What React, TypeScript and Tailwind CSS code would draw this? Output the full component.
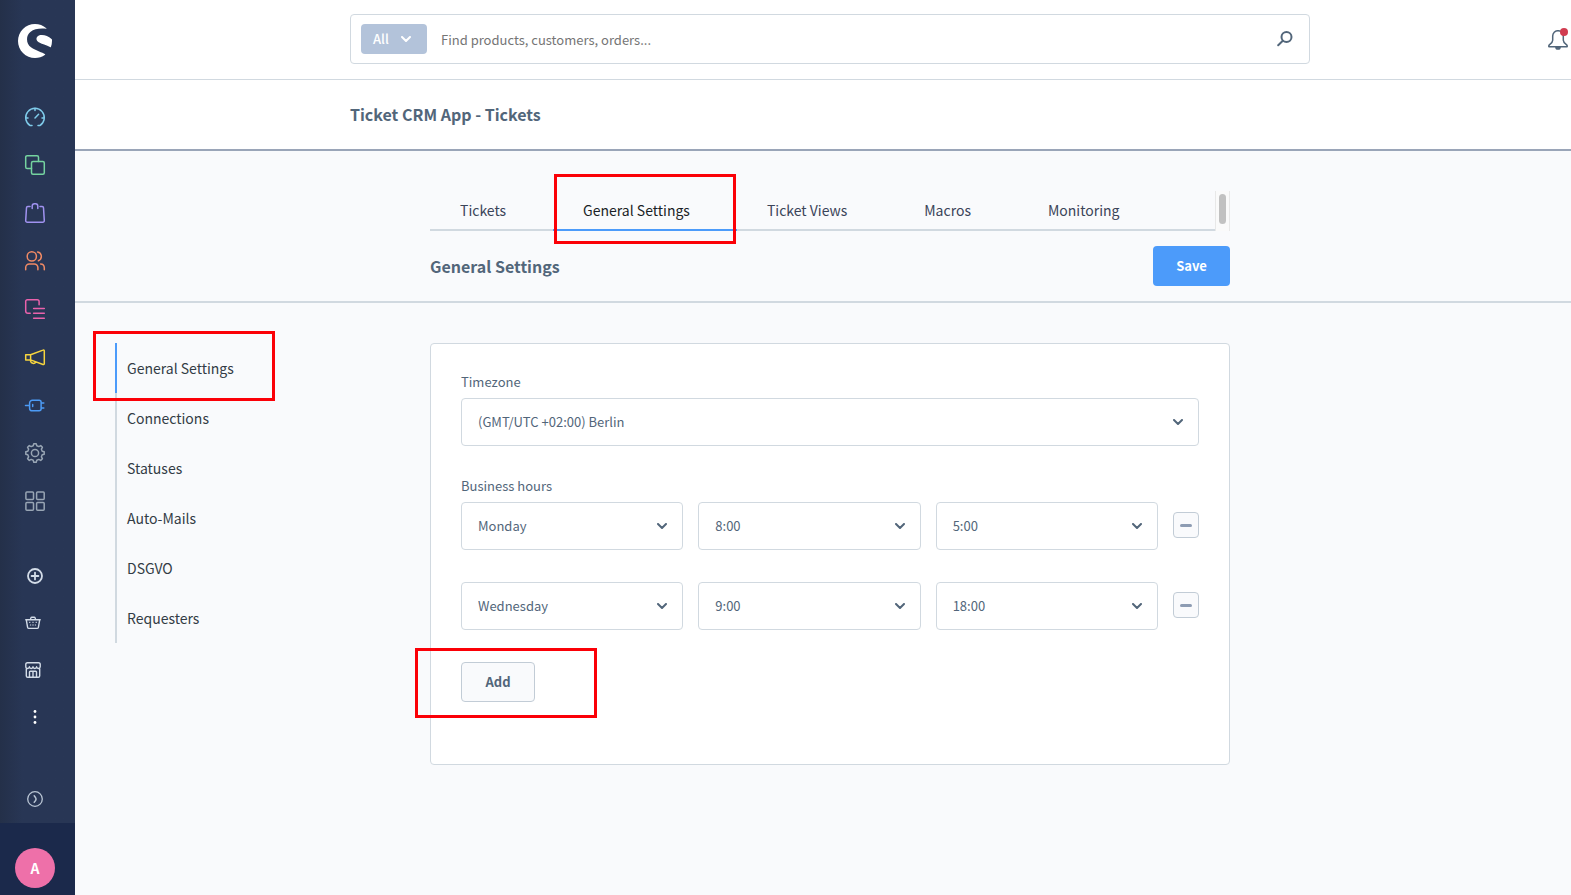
import React from 'react';
import { SiShopware } from 'react-icons/si';

const mainIcons: { label: string; color: string; icon: React.ReactNode }[] = [
  {
    label: 'Dashboard',
    color: 'text-[#7fcbea]',
    icon: <path d="M7 18.6H5.2A9.3 9.3 0 1 1 14.8 18.6H13M.9 11H3M17 11h2.1M10 1.2v2.3M10 11l3.6-3.8" />,
  },
  {
    label: 'Catalogues',
    color: 'text-[#75d3a0]',
    icon: (
      <>
        <path d="M6.5 13.5H2.2A1.5 1.5 0 0 1 .7 12V2.2A1.5 1.5 0 0 1 2.2.7H12a1.5 1.5 0 0 1 1.5 1.5v4.3" />
        <rect x="6.5" y="6.5" width="12.8" height="12.8" rx="1.5" />
      </>
    ),
  },
  {
    label: 'Orders',
    color: 'text-[#a092f0]',
    icon: <path d="M5 3.6H2.8a1.3 1.3 0 0 0-1.3 1.2L.7 17.6a1.6 1.6 0 0 0 1.6 1.7h15.4a1.6 1.6 0 0 0 1.6-1.7l-.8-12.8a1.3 1.3 0 0 0-1.3-1.2H15M7.2 5.6V3a2.3 2.3 0 0 1 2.3-2.3h1A2.3 2.3 0 0 1 12.800 3v2.600" />,
  },
  {
    label: 'Customers',
    color: 'text-[#f08a65]',
    icon: (
      <>
        <circle cx="6.8" cy="5.4" r="4.6" />
        <path d="M.7 18.8v-2.3a3.6 3.6 0 0 1 3.6-3.6h5a3.6 3.6 0 0 1 3.6 3.6v2.3M12.6.9a4.6 4.6 0 0 1 .8 8.8M15.6 12.9a3.9 3.9 0 0 1 3.7 3.8v2.1" />
      </>
    ),
  },
  {
    label: 'Content',
    color: 'text-[#ea62ac]',
    icon: <path d="M5.2 14.3H3a2.3 2.3 0 0 1-2.3-2.3V2.3A1.6 1.6 0 0 1 2.3.7h10a1.8 1.8 0 0 1 1.8 1.8v3.2M8.6 9.4h10.7M8.6 14.3h10.7M8.6 19.3h10.7" />,
  },
  {
    label: 'Marketing',
    color: 'text-[#f7d53e]',
    icon: <path d="M.7 7.8h4.9v5.1H.7zM5.6 7.8 18 3.1a.9.9 0 0 1 1.3.8v12.8a.9.9 0 0 1-1.3.8L5.6 12.9M5.6 13v1.2a3 3 0 0 0 5.2 1.1" />,
  },
  {
    label: 'Extensions',
    color: 'text-[#4c9bf5]',
    icon: <path d="M.5 10.5h4M7.6 5.2h6.5a2 2 0 0 1 2 2v6.6a2 2 0 0 1-2 2H7.2a2.6 2.6 0 0 1-2.6-2.6V8a2.8 2.8 0 0 1 3-2.8zM16.1 7.9h2.7M16.1 12.9h2.7M7.7 9.4v2.1" />,
  },
  {
    label: 'Settings',
    color: 'text-[#98a5b4]',
    icon: (
      <>
        <circle cx="10" cy="10" r="3.6" />
        <path d="M8.2 2.8 8.8.8h2.4l.6 2 2 .8 1.9-1 1.7 1.7-1 1.9.8 2 2 .6v2.4l-2 .6-.8 2 1 1.9-1.7 1.7-1.9-1-2 .8-.6 2H8.8l-.6-2-2-.8-1.9 1-1.7-1.7 1-1.9-.8-2-2-.6V8.8l2-.6.8-2-1-1.9 1.7-1.7 1.9 1z" />
      </>
    ),
  },
  {
    label: 'Apps',
    color: 'text-[#98a5b4]',
    icon: (
      <>
        <rect x=".9" y=".9" width="7.6" height="7.6" rx="1" />
        <rect x="11.6" y=".9" width="7.6" height="7.6" rx="1" />
        <rect x=".9" y="11.6" width="7.6" height="7.6" rx="1" />
        <rect x="11.6" y="11.6" width="7.6" height="7.6" rx="1" />
      </>
    ),
  },
];

const tabs = ['Tickets', 'General Settings', 'Ticket Views', 'Macros', 'Monitoring'];
const sections = ['General Settings', 'Connections', 'Statuses', 'Auto-Mails', 'DSGVO', 'Requesters'];
const businessHours = [
  { day: 'Monday', from: '8:00', to: '5:00' },
  { day: 'Wednesday', from: '9:00', to: '18:00' },
];

const Chevron: React.FC<{ className?: string }> = ({ className = '' }) => (
  <svg viewBox="0 0 10 6" className={`h-[6px] w-[10px] ${className}`} fill="none" stroke="currentColor" strokeWidth="2" strokeLinecap="round" strokeLinejoin="round">
    <path d="M1 1l4 4 4-4" />
  </svg>
);

// Red frame drawn on top of the element that the guide points at.
const Highlight: React.FC<{ className: string }> = ({ className }) => (
  <span aria-hidden="true" className={`pointer-events-none absolute z-10 h-[70px] w-[182px] border-3 border-[#fb0007] ${className}`} />
);

const SelectBox: React.FC<{ id?: string; label?: string; value: string }> = ({ id, label, value }) => (
  <div className="relative">
    <select
      id={id}
      aria-label={label}
      defaultValue={value}
      className="block h-12 w-full appearance-none rounded border border-[#d1d9e0] bg-white px-4 text-[13px] text-[#52667a] outline-none"
    >
      <option>{value}</option>
    </select>
    <Chevron className="pointer-events-none absolute top-[21px] right-4 text-[#52667a]" />
  </div>
);

const Sidebar: React.FC = () => (
  <aside className="sticky top-0 flex h-screen w-[75px] shrink-0 flex-col bg-linear-to-r from-[#243049] to-[#283655] to-30%">
    <a href="#" aria-label="Home" className="mt-6 mb-[35px] ml-[18px] block w-[34px] text-white">
      <SiShopware className="size-[34px]" />
    </a>
    <nav aria-label="Main" className="w-[70px]">
      {mainIcons.map((item) => (
        <a key={item.label} href="#" aria-label={item.label} className={`flex h-12 items-center justify-center ${item.color}`}>
          <svg viewBox="0 0 20 20" className="size-5 overflow-visible" fill="none" stroke="currentColor" strokeWidth="1.5" strokeLinecap="round" strokeLinejoin="round">
            {item.icon}
          </svg>
        </a>
      ))}
    </nav>
    <nav aria-label="Shortcuts" className="mt-[27px] w-[70px] text-[#d3dce8]">
      <a href="#" aria-label="Add" className="flex h-[47px] items-center justify-center">
        <svg viewBox="0 0 16 16" className="size-4" fill="none" stroke="currentColor" strokeWidth="1.8" strokeLinecap="round">
          <circle cx="8" cy="8" r="7" />
          <path d="M8 4.6v6.8M4.6 8h6.8" />
        </svg>
      </a>
      <a href="#" aria-label="Basket" className="flex h-[47px] items-center pl-[25px]">
        <svg viewBox="0 0 16 16" className="size-4" fill="none" stroke="currentColor" strokeWidth="1.4" strokeLinecap="round" strokeLinejoin="round">
          <path d="M.8 4.7h14.4M1.3 4.8l1.3 7.5a1.4 1.4 0 0 0 1.4 1.1h8a1.4 1.4 0 0 0 1.4-1.1l1.3-7.5M5.4 4.5l.5-1.6a1 1 0 0 1 1-.7h2.2a1 1 0 0 1 1 .7l.5 1.6" />
          <path d="M4.4 7.3h.6M7.7 7.3h.6M11 7.3h.6M5.3 10h.5M7.7 10h.6M10.2 10h.5" strokeWidth="1" />
        </svg>
      </a>
      <a href="#" aria-label="Storefront" className="flex h-[47px] items-center pl-[25px]">
        <svg viewBox="0 0 16 16" className="size-4" fill="none" stroke="currentColor" strokeWidth="1.4" strokeLinecap="round" strokeLinejoin="round">
          <path d="M1.3 7v7a1.4 1.4 0 0 0 1.4 1.3h10.6a1.4 1.4 0 0 0 1.4-1.3V7M2.4.7h11.2A1.6 1.6 0 0 1 15.2 2v2.7c0 2.3-3.4 2.3-3.6 0-.2 2.3-3.4 2.3-3.6 0-.2 2.3-3.4 2.3-3.6 0C4.2 7 .8 7 .8 4.7V2A1.6 1.6 0 0 1 2.4.7z" />
          <path d="M4.5 15.300V10a.8.8 0 0 1 .8-.8h5.400a.8.8 0 0 1 .8.8v5.300M8 9.500v5.700" />
        </svg>
      </a>
      <button type="button" aria-label="More" className="flex h-[47px] w-full items-center justify-center text-white">
        <svg viewBox="0 0 4 14" className="h-[14px] w-1" fill="currentColor">
          <circle cx="2" cy="1.5" r="1.4" />
          <circle cx="2" cy="7" r="1.4" />
          <circle cx="2" cy="12.5" r="1.4" />
        </svg>
      </button>
    </nav>
    <button type="button" aria-label="Expand menu" className="mt-auto flex h-12 w-[70px] shrink-0 items-center justify-center text-[#b9c5d4]">
      <svg viewBox="0 0 16 16" className="size-4" fill="none" stroke="currentColor" strokeWidth="1.3" strokeLinecap="round" strokeLinejoin="round">
        <circle cx="8" cy="8" r="7.3" />
        <path d="M7.200 4.700c1 1.100 1.900 2.200 1.900 3.300s-.9 2.200-1.900 3.300" strokeWidth="1.500" />
      </svg>
    </button>
    <div className="flex h-[72px] shrink-0 items-center bg-[#1b294b] pt-[18px] pl-[15px]">
      <button type="button" className="flex size-10 items-center justify-center rounded-full bg-[#ee70a9] text-sm font-bold text-white">
        A
      </button>
    </div>
  </aside>
);

const SearchHeader: React.FC = () => (
  <header className="grid h-20 grid-cols-[1fr_minmax(0,960px)_1fr] items-center border-b border-[#d1d9e0] bg-white pl-[14px]">
    <form role="search" className="col-start-2 -mt-px flex h-[50px] items-center rounded border border-[#d1d9e0] pr-4 pl-[10px]">
      <button type="button" className="flex h-[30px] w-[66px] items-center justify-between rounded bg-[#b3c3da] pr-4 pl-3 text-[13px] font-medium text-white">
        All
        <Chevron />
      </button>
      <input
        type="text"
        aria-label="Search"
        placeholder="Find products, customers, orders..."
        className="h-full min-w-0 flex-1 bg-transparent px-[14px] text-[13px] text-[#52667a] outline-none placeholder:text-[#757575]"
      />
      <button type="submit" aria-label="Start search" className="text-[#52667a]">
        <svg viewBox="0 0 16 16" className="size-4" fill="none" stroke="currentColor" strokeWidth="2" strokeLinecap="round">
          <circle cx="9.5" cy="6" r="5" />
          <path d="M5.800 9.700 1.200 14.200" />
        </svg>
      </button>
    </form>
    <button type="button" aria-label="Notifications" className="relative mr-[3px] justify-self-end text-[#52667a]">
      <svg viewBox="0 0 20 20" className="size-5" fill="none" stroke="currentColor" strokeWidth="1.5" strokeLinejoin="round">
        <path d="M10 .7a5.300 5.300 0 0 0-5.300 5.300v4.200c0 1.900-1.400 3.200-3.100 4.400-.9.700-1.200 2.200-.2 2.200h17.200c1 0 .7-1.500-.2-2.200-1.700-1.200-3.100-2.500-3.100-4.400V6A5.300 5.300 0 0 0 10 .7z" />
        <path d="M7.900 17a2.100 2.100 0 0 0 4.200 0z" fill="currentColor" />
      </svg>
      <span className="absolute -top-[2px] right-0 size-2 rounded-full bg-[#d13c50]" />
    </button>
  </header>
);

const TabBar: React.FC = () => (
  <div className="flex h-10">
    <nav aria-label="Ticket app" className="flex flex-1 border-b-2 border-[#d1d9e0]">
      {tabs.map((tab) => {
        const active = tab === 'General Settings';
        return (
          <a
            key={tab}
            href="#"
            aria-current={active ? 'page' : undefined}
            className={`relative -mb-[2px] flex h-10 items-center border-b-2 pr-[47px] pl-[30px] text-sm whitespace-nowrap ${
              active ? 'border-[#4c9bfa] text-[#1a1f26]' : 'border-transparent text-[#3b4459]'
            }`}
          >
            {tab}
            {active && <Highlight className="-top-[17px] left-px" />}
          </a>
        );
      })}
    </nav>
    <div className="w-[15px] border-x border-[#e8e8e8] bg-[#fafafa] px-[3px] pt-[3px]">
      <div className="h-[30px] rounded-full bg-[#c1c1c1]" />
    </div>
  </div>
);

const BusinessHoursCard: React.FC = () => (
  <form className="rounded border border-[#d1d9e0] bg-white px-[30px] pt-[30px] pb-[62px]">
    <label htmlFor="timezone" className="mb-2 block text-[13px] leading-4 text-[#52667a]">
      Timezone
    </label>
    <SelectBox id="timezone" value="(GMT/UTC +02:00) Berlin" />

    <fieldset className="mt-8">
      <legend className="mb-2 block text-[13px] leading-4 text-[#52667a]">Business hours</legend>
      <div className="space-y-8">
        {businessHours.map((row) => (
          <div key={row.day} className="grid grid-cols-[1fr_1fr_1fr_26px] gap-[15px]">
            <SelectBox label="Day" value={row.day} />
            <SelectBox label="From" value={row.from} />
            <SelectBox label="To" value={row.to} />
            <button
              type="button"
              aria-label={`Remove ${row.day}`}
              className="mt-[10px] flex size-[26px] items-center justify-center rounded border border-[#c2ccd6] bg-[#f9fafc]"
            >
              <span className="h-[3px] w-3 rounded-full bg-[#8d9cb3]" />
            </button>
          </div>
        ))}
      </div>
    </fieldset>

    <button
      type="button"
      className="relative mt-8 flex h-10 w-[74px] items-center justify-center rounded border border-[#c2ccd6] bg-[#f9fafc] text-[13px] font-bold text-[#52667a]"
    >
      Add
      <Highlight className="-top-[15px] -left-[47px]" />
    </button>
  </form>
);

export default function App() {
  return (
    <div className="flex min-h-screen bg-[#f9fafc] font-['Noto_Sans_CJK_SC',sans-serif]">
      <Sidebar />
      <div className="min-w-0 flex-1">
        <SearchHeader />
        <div className="grid h-[71px] grid-cols-[1fr_minmax(0,960px)_1fr] items-center border-b-2 border-[#9aa5b8] bg-white pb-[2px] pl-[14px]">
          <h1 className="col-start-2 text-base font-bold text-[#52667a]">Ticket CRM App - Tickets</h1>
        </div>

        <main>
          <div className="grid grid-cols-[1fr_minmax(0,800px)_1fr] border-b-2 border-[#d1d9e0] pt-10 pl-[14px]">
            <div className="col-start-2">
              <TabBar />
              <div className="flex h-[70px] items-center justify-between">
                <h2 className="text-base font-bold text-[#52667a]">General Settings</h2>
                <button type="button" className="h-10 w-[77px] rounded bg-[#4c9bfa] text-[13px] font-bold text-white">
                  Save
                </button>
              </div>
            </div>
          </div>

          <div className="grid grid-cols-[1fr_minmax(0,800px)_1fr] items-start py-10 pl-[14px]">
            <nav aria-label="Settings sections" className="pl-[26px]">
              <ul>
                {sections.map((section, idx) => (
                  <li key={section} className={`relative border-l-2 ${idx === 0 ? 'border-[#4c9bfa]' : 'border-[#d1d9e0]'}`}>
                    <a href="#" className="flex h-[50px] items-center pb-px pl-[10px] text-sm text-[#333c45]">
                      {section}
                    </a>
                    {idx === 0 && <Highlight className="-top-3 -left-6" />}
                  </li>
                ))}
              </ul>
            </nav>
            <BusinessHoursCard />
          </div>
        </main>
      </div>
    </div>
  );
}
